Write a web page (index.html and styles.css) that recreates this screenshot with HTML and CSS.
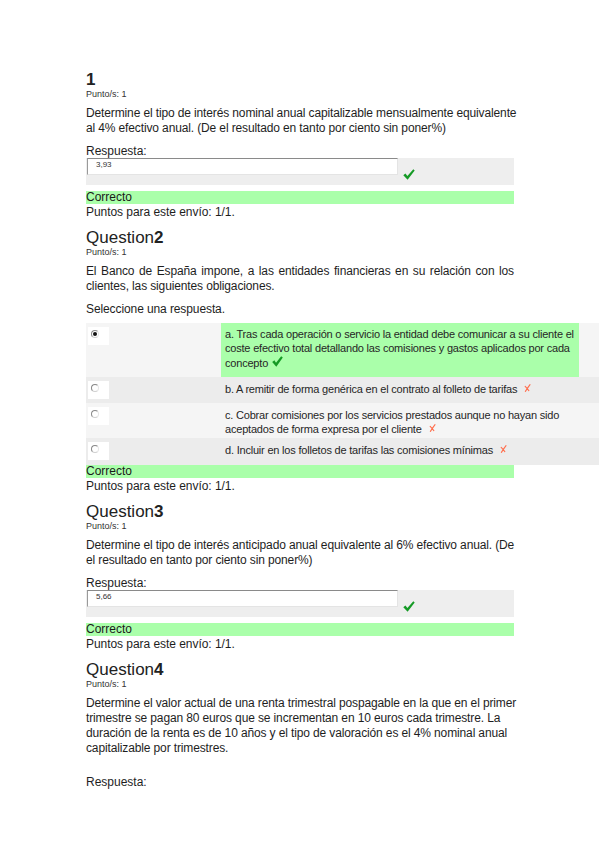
FILE: index.html
```html
<!DOCTYPE html>
<html lang="es">
<head>
<meta charset="utf-8">
<link rel="stylesheet" href="styles.css">
</head>
<body>
<div class="page">

<div class="q">
  <h2 class="qno"><b>1</b></h2>
  <div class="grade">Punto/s: 1</div>
  <p class="qtext">Determine el tipo de interés nominal anual capitalizable mensualmente equivalente al 4% efectivo anual. (De el resultado en tanto por ciento sin poner%)</p>
  <div class="label">Respuesta:</div>
  <div class="answer">
    <div class="input">3,93</div>
    <svg class="tick" viewBox="0 0 12 11" width="12" height="11"><path d="M0.3 6.3 L2.4 4.6 L4.4 7 L10.3 0.3 L11.7 1.5 L4.6 10.8 Z" fill="#159a25"/></svg>
  </div>
  <div class="correct">Correcto</div>
  <div class="points">Puntos para este envío: 1/1.</div>
</div>

<div class="q">
  <h2 class="qno">Question<b>2</b></h2>
  <div class="grade">Punto/s: 1</div>
  <p class="qtext justify">El Banco de España impone, a las entidades financieras en su relación con los clientes, las siguientes obligaciones.</p>
  <p class="prompt">Seleccione una respuesta.</p>
  <div class="options">
    <div class="opt r0">
      <div class="radio-cell"><span class="radio on"></span></div>
      <div class="opt-text ok">a. Tras cada operación o servicio la entidad debe comunicar a su cliente el coste efectivo total detallando las comisiones y gastos aplicados por cada concepto <svg class="tick big" viewBox="0 0 12 12" width="11" height="13"><path d="M0.2 6.6 L2.6 4.7 L4.4 7.4 L10 0.2 L11.8 1.5 L4.7 11.8 Z" fill="#159a25"/></svg></div>
    </div>
    <div class="opt r1">
      <div class="radio-cell"><span class="radio"></span></div>
      <div class="opt-text">b. A remitir de forma genérica en el contrato al folleto de tarifas <svg class="cross" viewBox="0 0 7 8" width="7" height="8"><path d="M6 0.6 C4.5 2.6 3 4.8 1.4 7.4 M1.2 2.4 C2.4 3.6 3.6 5 4.8 6.6" fill="none" stroke="#ff6f4e" stroke-width="1.1" stroke-linecap="round"/></svg></div>
    </div>
    <div class="opt r0">
      <div class="radio-cell"><span class="radio"></span></div>
      <div class="opt-text">c. Cobrar comisiones por los servicios prestados aunque no hayan sido aceptados de forma expresa por el cliente <svg class="cross" viewBox="0 0 7 8" width="7" height="8"><path d="M6 0.6 C4.5 2.6 3 4.8 1.4 7.4 M1.2 2.4 C2.4 3.6 3.6 5 4.8 6.6" fill="none" stroke="#ff6f4e" stroke-width="1.1" stroke-linecap="round"/></svg></div>
    </div>
    <div class="opt r1">
      <div class="radio-cell last"><span class="radio"></span></div>
      <div class="opt-text">d. Incluir en los folletos de tarifas las comisiones mínimas <svg class="cross" viewBox="0 0 7 8" width="7" height="8"><path d="M6 0.6 C4.5 2.6 3 4.8 1.4 7.4 M1.2 2.4 C2.4 3.6 3.6 5 4.8 6.6" fill="none" stroke="#ff6f4e" stroke-width="1.1" stroke-linecap="round"/></svg></div>
    </div>
  </div>
  <div class="correct flush">Correcto</div>
  <div class="points">Puntos para este envío: 1/1.</div>
</div>

<div class="q">
  <h2 class="qno">Question<b>3</b></h2>
  <div class="grade">Punto/s: 1</div>
  <p class="qtext">Determine el tipo de interés anticipado anual equivalente al 6% efectivo anual. (De el resultado en tanto por ciento sin poner%)</p>
  <div class="label">Respuesta:</div>
  <div class="answer">
    <div class="input">5,66</div>
    <svg class="tick" viewBox="0 0 12 11" width="12" height="11"><path d="M0.3 6.3 L2.4 4.6 L4.4 7 L10.3 0.3 L11.7 1.5 L4.6 10.8 Z" fill="#159a25"/></svg>
  </div>
  <div class="correct">Correcto</div>
  <div class="points">Puntos para este envío: 1/1.</div>
</div>

<div class="q">
  <h2 class="qno">Question<b>4</b></h2>
  <div class="grade">Punto/s: 1</div>
  <p class="qtext">Determine el valor actual de una renta trimestral pospagable en la que en el primer trimestre se pagan 80 euros que se incrementan en 10 euros cada trimestre. La duración de la renta es de 10 años y el tipo de valoración es el 4% nominal anual capitalizable por trimestres.</p>
  <div class="label far">Respuesta:</div>
</div>

</div>
</body>
</html>
```

FILE: styles.css
```css
html, body {
  margin: 0;
  padding: 0;
  background: #fff;
}
body {
  font-family: "Liberation Sans", Arial, sans-serif;
  color: #1e1e1e;
  font-size: 12px;
}
.page {
  padding: 71px 0 0 86px;
  width: 513px;
}
.q {
  width: 428px;
  margin-bottom: 8px;
}
.qno {
  margin: 0;
  font-size: 17px;
  font-weight: normal;
  line-height: 18px;
  color: #222;
}
.qno b { font-weight: bold; }
.grade {
  font-size: 9px;
  line-height: 10px;
  color: #333;
}
.qtext {
  margin: 7px 0 0 0;
  width: 434px;
  font-size: 12px;
  line-height: 15px;
  letter-spacing: -0.13px;
}
.qtext.justify { text-align: justify; width: 428px; }
.prompt {
  margin: 8px 0 0 0;
  font-size: 12px;
  line-height: 15px;
  letter-spacing: -0.1px;
}
.label {
  margin-top: 8px;
  font-size: 12px;
  line-height: 14px;
}
.label.far { margin-top: 19px; }
.answer {
  background: #eeeeee;
  height: 27px;
  display: flex;
  align-items: flex-start;
}
.input {
  width: 311px;
  height: 17px;
  margin-left: 1px;
  background: #fff;
  border-top: 1px solid #8a8a8a;
  border-left: 1px solid #9a9a9a;
  border-right: 1px solid #e4e4e4;
  border-bottom: 1px solid #e4e4e4;
  font-size: 8px;
  line-height: 11px;
  padding-left: 8px;
  box-sizing: border-box;
  color: #333;
}
.answer .tick {
  margin: 11px 0 0 5px;
}
.correct {
  background: #aaffaa;
  margin-top: 6px;
  font-size: 12px;
  line-height: 13px;
  color: #1a1a1a;
}
.correct.flush { margin-top: 0; }
.points {
  font-size: 12px;
  line-height: 17px;
  letter-spacing: -0.05px;
}
.options {
  margin-top: 6px;
  width: 513px;
}
.opt {
  display: grid;
  grid-template-columns: 135px 358px 20px;
  align-items: start;
}
.opt.r0 { background: #f5f5f5; }
.opt.r1 { background: #ececec; }
.radio-cell {
  padding: 4px 0 4px 2px;
  grid-column: 1;
}
.radio-cell.last { padding-bottom: 5px; }
.radio {
  display: block;
  width: 21px;
  height: 18px;
  background: #fff;
  position: relative;
}
.radio::before {
  content: "";
  position: absolute;
  left: 3px;
  top: 3px;
  width: 6px;
  height: 6px;
  border-radius: 50%;
  border: 1px solid #888;
  border-right-color: #e6e6e6;
  border-bottom-color: #cfcfcf;
  background: #fff;
}
.radio.on::after {
  content: "";
  position: absolute;
  left: 5px;
  top: 5px;
  width: 4px;
  height: 4px;
  border-radius: 50%;
  background: #111;
}
.opt-text {
  grid-column: 2;
  padding: 5px 2px 2px 4px;
  font-size: 11px;
  line-height: 14px;
  letter-spacing: -0.2px;
  color: #262626;
}
.opt-text.ok {
  background: #aaffaa;
  padding-top: 4px;
  padding-bottom: 7px;
  align-self: stretch;
}
.opt-text .tick { vertical-align: -1px; margin-left: 1px; }
.cross {
  margin-left: 4px;
  vertical-align: 1px;
}
```
